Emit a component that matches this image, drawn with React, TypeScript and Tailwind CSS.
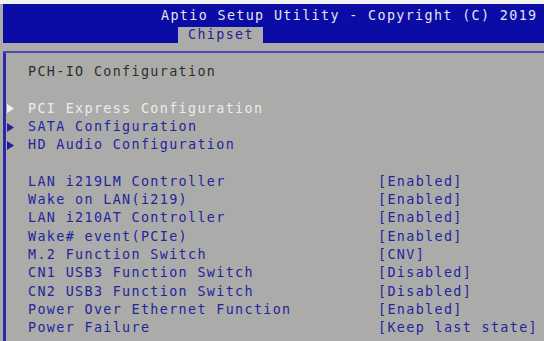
import React from "react";

const items = [
  ["LAN i219LM Controller", "[Enabled]"],
  ["Wake on LAN(i219)", "[Enabled]"],
  ["LAN i210AT Controller", "[Enabled]"],
  ["Wake# event(PCIe)", "[Enabled]"],
  ["M.2 Function Switch", "[CNV]"],
  ["CN1 USB3 Function Switch", "[Disabled]"],
  ["CN2 USB3 Function Switch", "[Disabled]"],
  ["Power Over Ethernet Function", "[Enabled]"],
  ["Power Failure", "[Keep last state]"],
];

function Tri({ color }: { color: string }) {
  return (
    <svg width="8" height="9" viewBox="0 0 8 9" className="shrink-0">
      <path d="M0 0 L7 4.5 L0 9 Z" fill={color} />
    </svg>
  );
}

export default function App() {
  return (
    <div
      className="w-[544px] h-[341px] overflow-hidden bg-[#abacaa] text-[13.4px] tracking-[1.35px]"
      style={{ fontFamily: '"DejaVu Sans Mono", "Liberation Mono", monospace' }}
    >
      <div className="h-[4px] bg-[#f2f2f4]" />
      <div className="ml-[3px] h-[39px] bg-[#0b0ba6] flex flex-col">
        <div className="h-[23px] pl-[158px] pt-[4px] leading-[16px] text-[#e4e4ec] whitespace-pre">
          Aptio Setup Utility - Copyright (C) 2019
        </div>
        <div className="ml-[175px] w-[85px] h-[16px] bg-[#abacaa] pl-[10px] leading-[16px] text-[#23238a]">
          Chipset
        </div>
      </div>
      <div className="h-[8px]" />
      <div className="ml-[3px] h-[2px] bg-[#4a4ab0]" />
      <div className="ml-[3px] h-[300px] border-l-[3px] border-[#2a2aa8] pt-[10px] leading-[18.3px] whitespace-pre">
        <div className="pl-[22px] text-[#2e2e2e]">PCH-IO Configuration</div>
        <div className="h-[18.3px]" />
        <div className="flex items-center text-[#ececec]">
          <div className="w-[22px] pl-[1px]"><Tri color="#f0f0f0" /></div>
          <span>PCI Express Configuration</span>
        </div>
        <div className="flex items-center text-[#24249c]">
          <div className="w-[22px] pl-[1px]"><Tri color="#20209c" /></div>
          <span>SATA Configuration</span>
        </div>
        <div className="flex items-center text-[#24249c]">
          <div className="w-[22px] pl-[1px]"><Tri color="#20209c" /></div>
          <span>HD Audio Configuration</span>
        </div>
        <div className="h-[18.3px]" />
        {items.map(([k, v]) => (
          <div key={k} className="flex text-[#24249c]">
            <span className="w-[372px] pl-[22px]">{k}</span>
            <span>{v}</span>
          </div>
        ))}
      </div>
    </div>
  );
}
